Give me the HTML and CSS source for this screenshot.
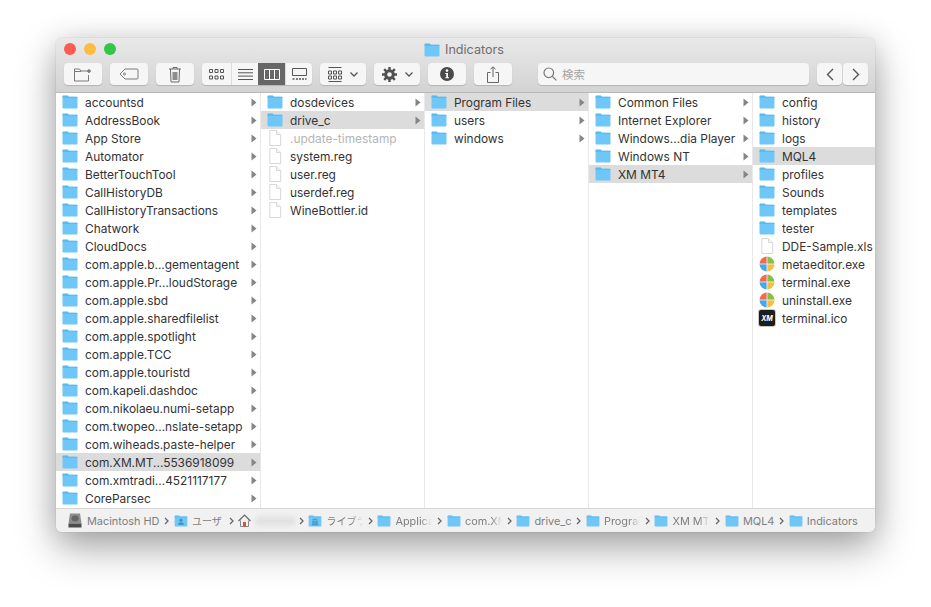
FILE: index.html
```html
<!DOCTYPE html>
<html lang="en">
<head>
  <meta charset="UTF-8">
  <title>Indicators</title>
  <link rel="stylesheet" href="styles.css">
</head>
<body>

  <!-- Shared icons -->
  <svg class="sprite" xmlns="http://www.w3.org/2000/svg">
    <symbol id="folder" viewBox="0 0 16 14">
      <path d="M.5 2V1.200C.5.700.8.500 1.200.500h4c.4 0 .6.100.9.400l.9 1.100z" fill="#4fb3ea"/>
      <path d="M.5 2.600C.5 2 .8 1.700 1.400 1.700h13.200c.6 0 .9.300.9.900v10c0 .6-.3.900-.9.900H1.400c-.6 0-.9-.3-.9-.9z" fill="#6fc7f7"/>
      <path d="M.5 2.400c0-.4.300-.7.900-.7h13.200c.6 0 .9.300.9.700v.5H.5z" fill="#5bbcf0"/>
    </symbol>
    <symbol id="folder-user" viewBox="0 0 16 14">
      <use href="#folder"/>
      <circle cx="8" cy="6" r="1.800" fill="#3f8fc4"/>
      <path d="M4.500 11.500c0-2 1.500-3 3.500-3s3.500 1 3.500 3z" fill="#3f8fc4"/>
    </symbol>
    <symbol id="folder-lib" viewBox="0 0 16 14">
      <use href="#folder"/>
      <path d="M4 11h8v1H4zM5 6.500h1.500V11H5zM7.300 6.500h1.400V11H7.300zM9.500 6.500H11V11H9.500zM4 5.500L8 4l4 1.500z" fill="#3f8fc4"/>
    </symbol>
    <symbol id="file" viewBox="0 0 14 17">
      <path d="M1.500.500h7.200l4.300 4.300v11.700H1.500z" fill="#fff" stroke="#d5d5d5"/>
      <path d="M8.700.500v4.300h4.300" fill="#f4f4f4" stroke="#d5d5d5"/>
    </symbol>
    <symbol id="exe" viewBox="0 0 16 16">
      <path d="M8 8V.500A7.500 7.500 0 0 0 .5 8z" fill="#ee6a50"/>
      <path d="M8 8V.500A7.500 7.500 0 0 1 15.500 8z" fill="#84c341"/>
      <path d="M8 8v7.500A7.500 7.500 0 0 1 .5 8z" fill="#49a9e8"/>
      <path d="M8 8v7.500A7.500 7.500 0 0 0 15.500 8z" fill="#fbbd41"/>
      <path d="M8 0v16M0 8h16" stroke="#f4f4f4" stroke-width=".8"/>
    </symbol>
    <symbol id="arrow" viewBox="0 0 6 9">
      <path d="M.5.500l5 4-5 4z" fill="#858585"/>
    </symbol>
    <symbol id="crumb" viewBox="0 0 5 8">
      <path d="M1 1l3 3-3 3" fill="none" stroke="#666" stroke-width="1.300"/>
    </symbol>
  </svg>

  <div class="window">

    <!-- Title bar and toolbar -->
    <header class="toolbar">
      <div class="lights">
        <span class="light red"></span>
        <span class="light yellow"></span>
        <span class="light green"></span>
      </div>
      <div class="title">
        <svg class="title-icon"><use href="#folder"/></svg>
        <span>Indicators</span>
      </div>

      <div class="tools">
        <button class="btn wide">
          <svg width="20" height="15" viewBox="0 0 20 15" fill="none" stroke="#7a7a7a"><path d="M1.500 14V2h5l1.500 2h8v2M1.500 4.500H8M1.500 14h14V8"/><path d="M16 2v4M14 4h4" stroke-width="1.300"/></svg>
        </button>
        <button class="btn wide">
          <svg width="20" height="12" viewBox="0 0 20 12" fill="none" stroke="#7a7a7a"><path d="M6 1h12a1 1 0 0 1 1 1v8a1 1 0 0 1-1 1H6L1 6z"/><circle cx="5.500" cy="6" r="1"/></svg>
        </button>
        <button class="btn wide">
          <svg width="14" height="17" viewBox="0 0 14 17" fill="none" stroke="#6a6a6a"><path d="M1 3h12M5 3V1.500h4V3M2.500 3l.5 13h8l.5-13"/><path d="M4.500 6h5v8h-5z" fill="#8e8e8e" stroke="none"/></svg>
        </button>

        <div class="views">
          <span class="view">
            <svg width="15" height="11" viewBox="0 0 15 11" fill="none" stroke="#555"><path d="M.5.500h3v3h-3zM6 .500h3v3H6zM11.500.500h3v3h-3zM.5 7h3v3h-3zM6 7h3v3H6zM11.500 7h3v3h-3z"/></svg>
          </span>
          <span class="view">
            <svg width="15" height="11" viewBox="0 0 15 11" stroke="#555"><path d="M0 .500h15M0 3.800h15M0 7.100h15M0 10.500h15"/></svg>
          </span>
          <span class="view active">
            <svg width="16" height="11" viewBox="0 0 16 11" fill="none" stroke="#fff"><path d="M.5.500h15v10H.5zM5.500.500v10M10.500.500v10"/></svg>
          </span>
          <span class="view">
            <svg width="15" height="12" viewBox="0 0 15 12" fill="none" stroke="#555"><path d="M.5.500h14v7H.5z"/><path d="M.5 11h2M4 11h2M7 11h2M10 11h2M13 11h1.500" stroke-width="1.500"/></svg>
          </span>
        </div>

        <button class="btn group">
          <svg width="14" height="15" viewBox="0 0 14 15" fill="none" stroke="#555"><path d="M.5.500h13M.5 14.500h13M.5 4h3v3h-3zM5.500 4h3v3h-3zM10.500 4h3v3h-3zM.5 9h3v3h-3zM5.500 9h3v3h-3zM10.500 9h3v3h-3z"/></svg>
          <svg class="caret" width="8" height="5" viewBox="0 0 8 5" fill="none" stroke="#555" stroke-width="1.300"><path d="M.5.500l3.500 3.500 3.500-3.500"/></svg>
        </button>
        <button class="btn group">
          <svg width="15" height="15" viewBox="0 0 15 15"><circle cx="7.500" cy="7.500" r="3.800" fill="none" stroke="#505050" stroke-width="3"/><path d="M7.500 0v3M7.500 12v3M0 7.500h3M12 7.500h3M2.200 2.200l2.100 2.100M10.700 10.700l2.100 2.100M12.800 2.200l-2.100 2.100M4.300 10.700l-2.100 2.100" stroke="#505050" stroke-width="2.400"/></svg>
          <svg class="caret" width="8" height="5" viewBox="0 0 8 5" fill="none" stroke="#555" stroke-width="1.300"><path d="M.5.500l3.500 3.500 3.500-3.500"/></svg>
        </button>
        <button class="btn wide">
          <svg width="14" height="14" viewBox="0 0 14 14"><circle cx="7" cy="7" r="7" fill="#4a4a4a"/><circle cx="7" cy="3.600" r="1.300" fill="#fff"/><path d="M5.300 6h2.700v4.300h1v1H5.300v-1h1V7h-1z" fill="#fff"/></svg>
        </button>
        <button class="btn wide">
          <svg width="12" height="17" viewBox="0 0 12 17" fill="none" stroke="#666"><path d="M3.500 6.500h-3v10h11v-10h-3M6 11V1M3.500 3.200L6 .8l2.500 2.400"/></svg>
        </button>

        <div class="search">
          <svg width="14" height="14" viewBox="0 0 14 14" fill="none" stroke="#777" stroke-width="1.200"><circle cx="5.800" cy="5.800" r="4.800"/><path d="M9.300 9.300l4 4"/></svg>
          <span>検索</span>
        </div>

        <div class="nav">
          <span class="nav-btn"><svg width="8" height="13" viewBox="0 0 8 13" fill="none" stroke="#555" stroke-width="1.400"><path d="M7 1L1.500 6.500 7 12"/></svg></span>
          <span class="nav-btn"><svg width="8" height="13" viewBox="0 0 8 13" fill="none" stroke="#555" stroke-width="1.400"><path d="M1 1l5.500 5.500L1 12"/></svg></span>
        </div>
      </div>
    </header>

    <!-- Column browser -->
    <main class="columns">
      <ul class="col col-first">
        <li><svg class="ico"><use href="#folder"/></svg><span>accountsd</span><svg class="arr"><use href="#arrow"/></svg></li>
        <li><svg class="ico"><use href="#folder"/></svg><span>AddressBook</span><svg class="arr"><use href="#arrow"/></svg></li>
        <li><svg class="ico"><use href="#folder"/></svg><span>App Store</span><svg class="arr"><use href="#arrow"/></svg></li>
        <li><svg class="ico"><use href="#folder"/></svg><span>Automator</span><svg class="arr"><use href="#arrow"/></svg></li>
        <li><svg class="ico"><use href="#folder"/></svg><span>BetterTouchTool</span><svg class="arr"><use href="#arrow"/></svg></li>
        <li><svg class="ico"><use href="#folder"/></svg><span>CallHistoryDB</span><svg class="arr"><use href="#arrow"/></svg></li>
        <li><svg class="ico"><use href="#folder"/></svg><span>CallHistoryTransactions</span><svg class="arr"><use href="#arrow"/></svg></li>
        <li><svg class="ico"><use href="#folder"/></svg><span>Chatwork</span><svg class="arr"><use href="#arrow"/></svg></li>
        <li><svg class="ico"><use href="#folder"/></svg><span>CloudDocs</span><svg class="arr"><use href="#arrow"/></svg></li>
        <li><svg class="ico"><use href="#folder"/></svg><span>com.apple.b...gementagent</span><svg class="arr"><use href="#arrow"/></svg></li>
        <li><svg class="ico"><use href="#folder"/></svg><span>com.apple.Pr...loudStorage</span><svg class="arr"><use href="#arrow"/></svg></li>
        <li><svg class="ico"><use href="#folder"/></svg><span>com.apple.sbd</span><svg class="arr"><use href="#arrow"/></svg></li>
        <li><svg class="ico"><use href="#folder"/></svg><span>com.apple.sharedfilelist</span><svg class="arr"><use href="#arrow"/></svg></li>
        <li><svg class="ico"><use href="#folder"/></svg><span>com.apple.spotlight</span><svg class="arr"><use href="#arrow"/></svg></li>
        <li><svg class="ico"><use href="#folder"/></svg><span>com.apple.TCC</span><svg class="arr"><use href="#arrow"/></svg></li>
        <li><svg class="ico"><use href="#folder"/></svg><span>com.apple.touristd</span><svg class="arr"><use href="#arrow"/></svg></li>
        <li><svg class="ico"><use href="#folder"/></svg><span>com.kapeli.dashdoc</span><svg class="arr"><use href="#arrow"/></svg></li>
        <li><svg class="ico"><use href="#folder"/></svg><span>com.nikolaeu.numi-setapp</span><svg class="arr"><use href="#arrow"/></svg></li>
        <li><svg class="ico"><use href="#folder"/></svg><span>com.twopeo...nslate-setapp</span><svg class="arr"><use href="#arrow"/></svg></li>
        <li><svg class="ico"><use href="#folder"/></svg><span>com.wiheads.paste-helper</span><svg class="arr"><use href="#arrow"/></svg></li>
        <li class="selected"><svg class="ico"><use href="#folder"/></svg><span>com.XM.MT...5536918099</span><svg class="arr"><use href="#arrow"/></svg></li>
        <li><svg class="ico"><use href="#folder"/></svg><span>com.xmtradi...4521117177</span><svg class="arr"><use href="#arrow"/></svg></li>
        <li><svg class="ico"><use href="#folder"/></svg><span>CoreParsec</span><svg class="arr"><use href="#arrow"/></svg></li>
      </ul>

      <ul class="col">
        <li><svg class="ico"><use href="#folder"/></svg><span>dosdevices</span><svg class="arr"><use href="#arrow"/></svg></li>
        <li class="selected"><svg class="ico"><use href="#folder"/></svg><span>drive_c</span><svg class="arr"><use href="#arrow"/></svg></li>
        <li class="hidden-file"><svg class="ico"><use href="#file"/></svg><span>.update-timestamp</span></li>
        <li><svg class="ico"><use href="#file"/></svg><span>system.reg</span></li>
        <li><svg class="ico"><use href="#file"/></svg><span>user.reg</span></li>
        <li><svg class="ico"><use href="#file"/></svg><span>userdef.reg</span></li>
        <li><svg class="ico"><use href="#file"/></svg><span>WineBottler.id</span></li>
      </ul>

      <ul class="col">
        <li class="selected"><svg class="ico"><use href="#folder"/></svg><span>Program Files</span><svg class="arr"><use href="#arrow"/></svg></li>
        <li><svg class="ico"><use href="#folder"/></svg><span>users</span><svg class="arr"><use href="#arrow"/></svg></li>
        <li><svg class="ico"><use href="#folder"/></svg><span>windows</span><svg class="arr"><use href="#arrow"/></svg></li>
      </ul>

      <ul class="col">
        <li><svg class="ico"><use href="#folder"/></svg><span>Common Files</span><svg class="arr"><use href="#arrow"/></svg></li>
        <li><svg class="ico"><use href="#folder"/></svg><span>Internet Explorer</span><svg class="arr"><use href="#arrow"/></svg></li>
        <li><svg class="ico"><use href="#folder"/></svg><span>Windows...dia Player</span><svg class="arr"><use href="#arrow"/></svg></li>
        <li><svg class="ico"><use href="#folder"/></svg><span>Windows NT</span><svg class="arr"><use href="#arrow"/></svg></li>
        <li class="selected"><svg class="ico"><use href="#folder"/></svg><span>XM MT4</span><svg class="arr"><use href="#arrow"/></svg></li>
      </ul>

      <ul class="col col-last">
        <li><svg class="ico"><use href="#folder"/></svg><span>config</span></li>
        <li><svg class="ico"><use href="#folder"/></svg><span>history</span></li>
        <li><svg class="ico"><use href="#folder"/></svg><span>logs</span></li>
        <li class="selected"><svg class="ico"><use href="#folder"/></svg><span>MQL4</span></li>
        <li><svg class="ico"><use href="#folder"/></svg><span>profiles</span></li>
        <li><svg class="ico"><use href="#folder"/></svg><span>Sounds</span></li>
        <li><svg class="ico"><use href="#folder"/></svg><span>templates</span></li>
        <li><svg class="ico"><use href="#folder"/></svg><span>tester</span></li>
        <li><svg class="ico"><use href="#file"/></svg><span>DDE-Sample.xls</span></li>
        <li><svg class="ico"><use href="#exe"/></svg><span>metaeditor.exe</span></li>
        <li><svg class="ico"><use href="#exe"/></svg><span>terminal.exe</span></li>
        <li><svg class="ico"><use href="#exe"/></svg><span>uninstall.exe</span></li>
        <li><span class="xm-icon"><b>XM</b></span><span>terminal.ico</span></li>
      </ul>
    </main>

    <!-- Path bar -->
    <footer class="pathbar">
      <span class="crumb">
        <svg class="disk" width="14" height="15" viewBox="0 0 14 15"><path d="M2 .500h10l1.500 10h-13z" fill="#8d8d8d"/><ellipse cx="7" cy="5.500" rx="3.500" ry="3" fill="#666"/><path d="M.5 10.500h13v4h-13z" fill="#4b4b4b"/></svg>
        <span>Macintosh HD</span>
      </span>
      <svg class="sep"><use href="#crumb"/></svg>
      <span class="crumb"><svg class="crumb-ico"><use href="#folder-user"/></svg><span class="ja w-user">ユーザ</span></span>
      <svg class="sep"><use href="#crumb"/></svg>
      <span class="crumb">
        <svg class="home" width="13" height="13" viewBox="0 0 13 13"><path d="M2.500 6.500v6h8v-6" fill="#f2f2f2" stroke="#888"/><path d="M.5 7l6-6 6 6" fill="none" stroke="#666" stroke-width="1.200"/><path d="M5 8h3v4.500H5z" fill="#d8533f"/></svg>
        <span class="blur-name"></span>
      </span>
      <svg class="sep"><use href="#crumb"/></svg>
      <span class="crumb"><svg class="crumb-ico"><use href="#folder-lib"/></svg><span class="ja cut cut-library">ライブラ</span></span>
      <svg class="sep"><use href="#crumb"/></svg>
      <span class="crumb"><svg class="crumb-ico"><use href="#folder"/></svg><span class="cut cut-app">Applica</span></span>
      <svg class="sep"><use href="#crumb"/></svg>
      <span class="crumb"><svg class="crumb-ico"><use href="#folder"/></svg><span class="cut cut-com">com.XM</span></span>
      <svg class="sep"><use href="#crumb"/></svg>
      <span class="crumb"><svg class="crumb-ico"><use href="#folder"/></svg><span>drive_c</span></span>
      <svg class="sep"><use href="#crumb"/></svg>
      <span class="crumb"><svg class="crumb-ico"><use href="#folder"/></svg><span class="cut cut-prog">Program</span></span>
      <svg class="sep"><use href="#crumb"/></svg>
      <span class="crumb"><svg class="crumb-ico"><use href="#folder"/></svg><span class="cut cut-xm">XM MT4</span></span>
      <svg class="sep"><use href="#crumb"/></svg>
      <span class="crumb"><svg class="crumb-ico"><use href="#folder"/></svg><span>MQL4</span></span>
      <svg class="sep"><use href="#crumb"/></svg>
      <span class="crumb"><svg class="crumb-ico"><use href="#folder"/></svg><span>Indicators</span></span>
    </footer>
  </div>

</body>
</html>
```

FILE: styles.css
```css
/* Reset default styles */
* {
  margin: 0;
  padding: 0;
  box-sizing: border-box;
}

body {
  width: 931px;
  height: 607px;
  padding: 38px 56px 75px;
  overflow: hidden;
  background: #fff;
  font-family: "Inter", "Noto Sans CJK JP", sans-serif;
  font-size: 11.900px;
  color: #333;
}

.sprite {
  display: none;
}

/* Window */
.window {
  display: flex;
  flex-direction: column;
  width: 819px;
  height: 494px;
  border-radius: 6px;
  overflow: hidden;
  background: #fff;
  box-shadow: 0 0 1px rgba(0, 0, 0, 0.35), 0 16px 38px rgba(0, 0, 0, 0.34), 0 0 28px rgba(0, 0, 0, 0.1);
}

/* Toolbar */
.toolbar {
  position: relative;
  height: 55px;
  padding: 25px 0 0 8px;
  background: linear-gradient(#e9e9e9, #d3d3d3);
  border-bottom: 1px solid #b9b9b9;
}

.lights {
  position: absolute;
  top: 5px;
  left: 8px;
  display: flex;
  gap: 8px;
}

.light {
  width: 12px;
  height: 12px;
  border-radius: 50%;
}

.red { background: #fc5b52; }
.yellow { background: #fdbc40; }
.green { background: #33c748; }

.title {
  position: absolute;
  top: 4px;
  left: 368px;
  display: flex;
  align-items: center;
  gap: 5px;
  font-size: 12.600px;
  line-height: 16px;
  color: #6e6e6e;
}

.title-icon {
  width: 16px;
  height: 14px;
}

.tools {
  display: flex;
  align-items: center;
  height: 22px;
  gap: 8px;
}

.btn,
.views,
.search,
.nav-btn {
  display: flex;
  align-items: center;
  justify-content: center;
  height: 22px;
  border: none;
  border-radius: 4px;
  background: #f6f6f6;
  box-shadow: 0 1px 1px rgba(0, 0, 0, 0.16);
}

.wide {
  width: 38px;
}

.group {
  width: 46px;
  gap: 8px;
}

.views {
  width: 110px;
  overflow: hidden;
}

.view {
  display: flex;
  align-items: center;
  justify-content: center;
  width: 27px;
  height: 22px;
  border-left: 1px solid #dcdcdc;
}

.view:first-child {
  width: 29px;
  border-left: none;
}

.view.active {
  background: #666;
  border-left: none;
}

.search {
  justify-content: flex-start;
  width: 271px;
  margin-left: 18px;
  padding-left: 5px;
  gap: 5px;
  color: #a5a5a5;
  font-size: 11.500px;
}

.nav {
  display: flex;
  gap: 1px;
}

.nav-btn {
  width: 25px;
}

/* Columns */
.columns {
  flex: 1;
  display: flex;
  min-height: 0;
}

.col {
  flex: none;
  width: 164px;
  list-style: none;
  border-right: 1px solid #e8e8e8;
}

.col-first {
  width: 205px;
}

.col-last {
  flex: 1;
  min-width: 0;
  border-right: none;
}

.col li {
  display: flex;
  align-items: center;
  height: 18px;
  padding: 0 3px 0 6px;
  white-space: nowrap;
}

.col li.selected {
  background: #dcdcdc;
}

.col li.hidden-file {
  color: #b5b5b5;
}

.ico {
  flex: none;
  width: 16px;
  height: 16px;
  margin-right: 7px;
}

.arr {
  flex: none;
  width: 6px;
  height: 9px;
  margin-left: auto;
}

.xm-icon {
  flex: none;
  display: flex;
  align-items: center;
  justify-content: center;
  width: 16px;
  height: 16px;
  margin-right: 7px;
  border-radius: 2px;
  background: #1d1d1d;
  box-shadow: 0 0 0 1px #c8c8c8;
  color: #fff;
  font-size: 7px;
  font-style: italic;
  line-height: 1;
}

/* Path bar */
.pathbar {
  display: flex;
  align-items: center;
  height: 24px;
  padding-left: 12px;
  background: #f1f1f1;
  border-top: 1px solid #d6d6d6;
  color: #7e7e7e;
  font-size: 10.900px;
  white-space: nowrap;
}

.crumb {
  display: flex;
  align-items: center;
  gap: 4px;
}

.crumb-ico {
  width: 14px;
  height: 12px;
}

.disk {
  margin-right: 1px;
}

.sep {
  flex: none;
  width: 5px;
  height: 8px;
  margin: 0 4.500px 0 5px;
}

.ja {
  font-size: 10px;
}

.w-user {
  width: 32px;
}

.blur-name {
  width: 41px;
  height: 10px;
  margin-right: -2.500px;
  border-radius: 5px;
  background: #e2e2e2;
  filter: blur(2px);
}

/* Truncated path items fade out on the right */
.cut {
  overflow: hidden;
  -webkit-mask-image: linear-gradient(to right, #000 70%, transparent);
  mask-image: linear-gradient(to right, #000 70%, transparent);
}

.cut-library { width: 36.500px; }
.cut-app { width: 37px; }
.cut-com { width: 37px; }
.cut-prog { width: 36px; }
.cut-xm { width: 38px; }
```
